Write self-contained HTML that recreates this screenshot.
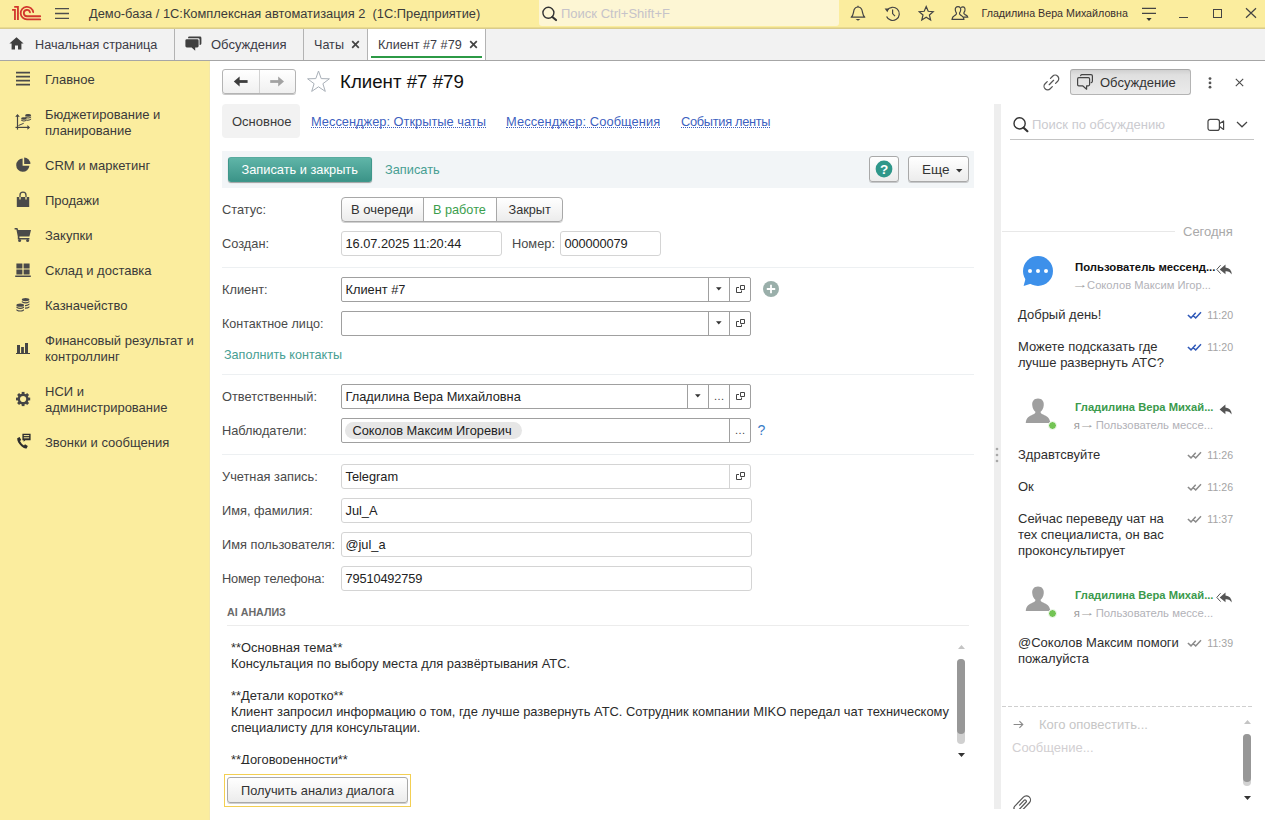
<!DOCTYPE html>
<html lang="ru"><head><meta charset="utf-8"><title>Клиент #7 #79</title>
<style>
*{box-sizing:border-box;margin:0;padding:0}
html,body{width:1265px;height:820px;overflow:hidden;background:#fff}
body{font-family:"Liberation Sans",Arial,sans-serif;font-size:13px;color:#333;position:relative}
.a{position:absolute;white-space:nowrap}
#titlebar{left:0;top:0;width:1265px;height:29px;background:linear-gradient(#fbed9e 0,#fbed9e 27px,#eadb8e 27px,#eadb8e 28px,#d9cc8c 28px,#d9cc8c 29px)}
#tabbar{left:0;top:29px;width:1265px;height:32px;background:#f2f2f2;border-bottom:1px solid #a6a6a6}
#sidebar{left:0;top:61px;width:210px;height:759px;background:#fbed9e;border-right:1px solid #f4e8a8}
.t{position:absolute;white-space:nowrap;line-height:16px}
.sep{position:absolute;width:1px;background:#b3b3b3;top:29px;height:31px}
.side{position:absolute;left:45px;font-size:13px;line-height:16px;color:#3a3a3a}
.lbl{position:absolute;margin-top:1px;left:222px;font-size:12.8px;line-height:16px;color:#4a4a4a;white-space:nowrap}
.inp{position:absolute;height:24px;border:1px solid #a0a0a0;border-radius:2px;background:#fff;font-size:12.8px;line-height:23px;padding-left:3.5px;color:#222;white-space:nowrap}
.inp.ro{border-color:#d4d4d4}
.hr{position:absolute;left:222px;width:752px;height:1px;background:#edf0f2}
.btn{position:absolute;border:1px solid #a9a9a9;border-radius:3px;background:linear-gradient(#ffffff,#ececec);box-shadow:0 1px 0 rgba(0,0,0,.18);font-size:13px;color:#333;text-align:center;white-space:nowrap}
.ib{position:absolute;top:0;height:23px;width:22px;border-left:1px solid #a0a0a0}
.msg{position:absolute;left:1018px;font-size:13px;line-height:16px;color:#2e2e2e;white-space:nowrap}
.tm{position:absolute;left:1207.3px;font-size:10.6px;line-height:16px;color:#a4a4a4}
.nm{position:absolute;left:1075px;font-size:11.2px;font-weight:bold;line-height:14px;white-space:nowrap}
.sub{position:absolute;left:1075px;font-size:11.3px;line-height:14px;color:#b2b2b8;white-space:nowrap}
.lnk{position:absolute;font-size:12.85px;line-height:16px;color:#3d5fc0;white-space:nowrap;border-bottom:1px dotted #3d5fc0;height:14px}
</style></head><body>
<!-- TITLEBAR -->
<div class="a" id="titlebar">
<svg class="a" style="left:8px;top:2px" width="40" height="24" viewBox="0 0 40 24"><g fill="none" stroke="#d2372d" stroke-width="1.8"><path d="M6.2 4.95H9.95V18.1"/><path d="M4.1 7.95H6.95V18.1"/><path d="M25.2 10.2A6.3 6.3 0 1 0 19 17.4H32.2" stroke-linecap="round"/><path d="M22 10.3A3.15 3.15 0 1 0 19 14.25H32.2" stroke-linecap="round"/></g></svg>
<svg class="a" style="left:55px;top:7px" width="15" height="13" viewBox="0 0 15 13"><path d="M0 1.7H14M0 6.5H14M0 11.3H14" stroke="#4d4d4d" stroke-width="1.3"/></svg>
<div class="t" style="left:89px;top:6px;font-size:12.85px;white-space:pre;color:#3b3b3b">Демо-база / 1С:Комплексная автоматизация 2  (1С:Предприятие)</div>
<div class="a" style="left:539px;top:0;width:300px;height:26px;background:#fdf6d4;border-radius:0 0 3px 3px"></div>
<svg class="a" style="left:540px;top:5px" width="18" height="17" viewBox="0 0 18 17"><circle cx="8.4" cy="7.8" r="5.5" fill="none" stroke="#333" stroke-width="1.4"/><path d="M12.4 12 L16 15" stroke="#333" stroke-width="2.2" stroke-linecap="round"/></svg>
<div class="t" style="left:561px;top:6px;font-size:13px;color:#c6c3c9">Поиск Ctrl+Shift+F</div>
<svg class="a" style="left:850px;top:5px" width="16" height="17" viewBox="0 0 16 17"><path d="M1.2 12.2 C3.6 10.5 3.2 7 4.2 4.6 C5 2.6 6.6 2 8 2 C9.4 2 11 2.6 11.8 4.6 C12.8 7 12.4 10.5 14.8 12.2 Z" fill="none" stroke="#444" stroke-width="1.2" stroke-linejoin="round"/><path d="M8 0.8V2" stroke="#444" stroke-width="1.2"/><path d="M5.6 14 H10.4 L8 15.8Z" fill="#444"/></svg>
<svg class="a" style="left:884px;top:5px" width="17" height="17" viewBox="0 0 17 17"><path d="M3.2 5.2 A6.6 6.6 0 1 1 2.6 11.4" fill="none" stroke="#444" stroke-width="1.2"/><path d="M0.6 3.6 L5 3.4 L3.4 7.2Z" fill="#444"/><path d="M8.6 4.4 V8.6 L11 11.2" fill="none" stroke="#444" stroke-width="1.2"/></svg>
<svg class="a" style="left:918px;top:5px" width="17" height="17" viewBox="0 0 17 17"><path d="M8.2 1.6 L10.2 6.3 L15.2 6.7 L11.4 10 L12.6 15 L8.2 12.3 L3.8 15 L5 10 L1.2 6.7 L6.2 6.3 Z" fill="none" stroke="#444" stroke-width="1.2" stroke-linejoin="miter"/></svg>
<svg class="a" style="left:951px;top:5px" width="18" height="17" viewBox="0 0 18 17"><g fill="none" stroke="#444" stroke-width="1.2" stroke-linejoin="round"><path d="M10.2 2.8 C10.8 1.6 12.8 1.4 13.6 2.8 C14.4 4.2 13.9 6.6 12.9 7.6 C12.6 8.4 13 9 14 9.6 C15.4 10.3 16.6 10.6 16.8 12.2 H12.6"/><path d="M7 1.6 C9 1.6 9.9 3.2 9.7 5 C9.5 6.6 8.9 7.6 8.5 8.2 C8.3 9.2 8.8 9.8 10 10.4 C11.6 11.2 12.8 11.6 13 14.4 H1 C1.2 11.6 2.4 11.2 4 10.4 C5.2 9.8 5.7 9.2 5.5 8.2 C5.1 7.6 4.5 6.6 4.3 5 C4.1 3.2 5 1.6 7 1.6Z"/></g></svg>
<div class="t" style="left:981.5px;top:5px;font-size:10.7px;color:#3a2f2f">Гладилина Вера Михайловна</div>
<svg class="a" style="left:1141px;top:6px" width="16" height="16" viewBox="0 0 16 16"><path d="M1 2.3H15M1 7.4H15" stroke="#444" stroke-width="1.2"/><path d="M5.4 12 H10.6 L8 15Z" fill="#333"/></svg>
<div class="a" style="left:1179px;top:16.5px;width:9px;height:1.4px;background:#444"></div>
<div class="a" style="left:1213px;top:9px;width:9px;height:9px;border:1.3px solid #444"></div>
<svg class="a" style="left:1245px;top:7px" width="12" height="12" viewBox="0 0 12 12"><path d="M1 1.2 L11 10.8 M11 1.2 L1 10.8" stroke="#444" stroke-width="1.2"/></svg>
</div>
<!-- TABBAR -->
<div class="a" id="tabbar"></div>
<svg class="a" style="left:9px;top:37px" width="15" height="13" viewBox="0 0 15 13"><path d="M7.5 0.3 L0.4 6.6 H2.6 V12.6 H6 V8.4 H9 V12.6 H12.4 V6.6 H14.6 Z" fill="#3f3f3f"/></svg>
<div class="t" style="left:35px;top:37px;font-size:12.65px;color:#3b3b46">Начальная страница</div>
<div class="sep" style="left:174px"></div>
<svg class="a" style="left:185px;top:36px" width="17" height="16" viewBox="0 0 17 16"><path d="M4.4 0.6 H15 Q16.4 0.6 16.4 2 V7.6 Q16.4 9 15 9 H14.6 V3.6 Q14.6 2.2 13.2 2.2 H3 V2 Q3 0.6 4.4 0.6Z" fill="#3f3f3f"/><path d="M1.8 3.2 H12.2 Q13.6 3.2 13.6 4.6 V10 Q13.6 11.4 12.2 11.4 H10.2 V14.8 L6.6 11.4 H1.8 Q0.4 11.4 0.4 10 V4.6 Q0.4 3.2 1.8 3.2Z" fill="#3f3f3f"/></svg>
<div class="t" style="left:211px;top:37px;font-size:13px;color:#3b3b46">Обсуждения</div>
<div class="sep" style="left:303px"></div>
<div class="t" style="left:314px;top:37px;font-size:12.6px;color:#3b3b46">Чаты</div>
<svg class="a" style="left:351px;top:40px" width="9" height="9" viewBox="0 0 9 9"><path d="M1.2 1.2 L7.8 7.8 M7.8 1.2 L1.2 7.8" stroke="#444" stroke-width="1.7"/></svg>
<div class="sep" style="left:367px"></div>
<div class="a" style="left:368px;top:29px;width:117px;height:31px;background:#fff"></div>
<div class="a" style="left:371px;top:56px;width:111px;height:2px;background:#2c9a46"></div>
<div class="t" style="left:378px;top:37px;font-size:12.64px;color:#3b3b46">Клиент #7 #79</div>
<svg class="a" style="left:469px;top:40px" width="9" height="9" viewBox="0 0 9 9"><path d="M1.2 1.2 L7.8 7.8 M7.8 1.2 L1.2 7.8" stroke="#444" stroke-width="1.7"/></svg>
<div class="sep" style="left:485px"></div>
<!-- SIDEBAR -->
<div class="a" id="sidebar"></div>
<svg class="a" style="left:16px;top:71px" width="14" height="15" viewBox="0 0 14 15"><path d="M0 1.6H14M0 5.6H14M0 9.6H14M0 13.6H14" stroke="#4a4a4a" stroke-width="1.7"/></svg>
<div class="side" style="top:72px">Главное</div>
<svg class="a" style="left:15px;top:113px" width="17" height="18" viewBox="0 0 17 18"><g stroke="#454545" fill="none"><path d="M2.5 2.5V16.6" stroke-width="1.2"/><path d="M0.5 14.4H13" stroke-width="1.2"/><path d="M3.5 12.5L8.7 10.3" stroke-width="1"/></g><path d="M2.5 1L4.8 3.7H0.2ZM15.1 14.4L12.4 12.1V16.7Z" fill="#454545"/><g fill="#454545"><ellipse cx="13.1" cy="2.4" rx="3" ry="1.3"/><path d="M10.1 3.5Q13.1 5.5 16.1 3.5V4.5Q13.1 6.5 10.1 4.5Z"/><path d="M11.6 6.6Q14 6.9 16.1 5.4V6.4Q14 7.9 11.6 7.6Z"/><ellipse cx="8.9" cy="5.4" rx="2.8" ry="1.25"/><path d="M6.1 6.5Q8.9 8.5 11.7 6.5V7.5Q8.9 9.5 6.1 7.5Z"/></g></svg>
<div class="side" style="top:107px">Бюджетирование и<br>планирование</div>
<svg class="a" style="left:16px;top:157px" width="15" height="16" viewBox="0 0 15 16"><path d="M6.6 1.6 A6.6 6.6 0 1 0 13.4 8.8 H6.6Z" fill="#4a4a4a"/><path d="M8.2 0.6 A6.4 6.4 0 0 1 14.4 7 H8.2Z" fill="#4a4a4a"/></svg>
<div class="side" style="top:158px">CRM и маркетинг</div>
<svg class="a" style="left:16px;top:191px" width="14" height="17" viewBox="0 0 14 17"><path d="M0.8 6 H13.2 V16 H0.8Z" fill="#4a4a4a"/><path d="M4 8.4 V4.2 A3 3 0 0 1 10 4.2 V8.4" fill="none" stroke="#4a4a4a" stroke-width="1.3"/><path d="M4 6V8.4M10 6V8.4" stroke="#fbed9e" stroke-width="1.3"/></svg>
<div class="side" style="top:193px">Продажи</div>
<svg class="a" style="left:14px;top:227px" width="18" height="16" viewBox="0 0 18 16"><path d="M0.6 1 H3.4 L4.2 3 H17 L15.4 9.6 H5.4 V11 H15.4 V12.4 H3.8 V9.4 L2.4 2.4 H0.6Z" fill="#4a4a4a"/><circle cx="5.6" cy="13.6" r="1.5" fill="#4a4a4a"/><circle cx="13.6" cy="13.6" r="1.5" fill="#4a4a4a"/></svg>
<div class="side" style="top:228px">Закупки</div>
<svg class="a" style="left:15px;top:263px" width="16" height="15" viewBox="0 0 16 15"><path d="M1.4 0.4H7.4V5.4H1.4ZM8.6 0.4H14.6V5.4H8.6ZM1.4 6.6H7.4V11.6H1.4ZM8.6 6.6H14.6V11.6H8.6ZM0.2 12.6H15.8V14H0.2Z" fill="#4a4a4a"/></svg>
<div class="side" style="top:263px">Склад и доставка</div>
<svg class="a" style="left:16px;top:297px" width="15" height="17" viewBox="0 0 15 17"><g fill="#4a4a4a"><ellipse cx="9.6" cy="2.6" rx="3.8" ry="1.6"/><path d="M5.8 4 Q9.6 6.4 13.4 4 V5.2 Q9.6 7.6 5.8 5.2Z"/><path d="M9 7.9 Q11.6 8 13.4 6.6 V7.8 Q11.6 9.4 9 9.2Z"/><path d="M9 10.5 Q11.6 10.6 13.4 9.2 V10.4 Q11.6 12 9 11.8Z"/><ellipse cx="4.2" cy="8.2" rx="3.8" ry="1.6"/><path d="M0.4 9.6 Q4.2 12 8 9.6 V10.8 Q4.2 13.2 0.4 10.8Z"/><path d="M0.4 12.2 Q4.2 14.6 8 12.2 V13.4 Q4.2 15.8 0.4 13.4Z"/></g></svg>
<div class="side" style="top:298px">Казначейство</div>
<svg class="a" style="left:16px;top:343px" width="15" height="12" viewBox="0 0 15 12"><path d="M1 2H4V10.3H1ZM5.1 4.1H7.9V10.3H5.1ZM9 0H12V10.3H9ZM0 10.1H14V11.1H0Z" fill="#454545"/></svg>
<div class="side" style="top:333px">Финансовый результат и<br>контроллинг</div>
<svg class="a" style="left:15px;top:391px" width="16" height="16" viewBox="0 0 16 16"><g transform="translate(8.1 8)"><circle r="4.3" fill="none" stroke="#454545" stroke-width="2.4"/><g fill="#454545"><rect x="-1.4" y="-7.1" width="2.8" height="3" transform="rotate(0)"/><rect x="-1.4" y="-7.1" width="2.8" height="3" transform="rotate(45)"/><rect x="-1.4" y="-7.1" width="2.8" height="3" transform="rotate(90)"/><rect x="-1.4" y="-7.1" width="2.8" height="3" transform="rotate(135)"/><rect x="-1.4" y="-7.1" width="2.8" height="3" transform="rotate(180)"/><rect x="-1.4" y="-7.1" width="2.8" height="3" transform="rotate(225)"/><rect x="-1.4" y="-7.1" width="2.8" height="3" transform="rotate(270)"/><rect x="-1.4" y="-7.1" width="2.8" height="3" transform="rotate(315)"/></g></g></svg>
<div class="side" style="top:384px">НСИ и<br>администрирование</div>
<svg class="a" style="left:15px;top:433px" width="17" height="17" viewBox="0 0 17 17"><path d="M2.2 5.2 L4.6 4 L6.2 7 L5 8 Q6.4 11 9 12.4 L10 11.2 L12.8 13 L11.6 15.4 Q9.8 16.2 6.4 13.2 Q2 9 2.2 5.2Z" fill="#2e2e2e"/><path d="M7.4 0.8 H15.6 V7.2 H10.4 L8.6 8.8 V7.2 H7.4Z" fill="#2e2e2e"/><path d="M8.8 2.6H14.2M8.8 4.8H14.2" stroke="#fbed9e" stroke-width="1"/></svg>
<div class="side" style="top:435px">Звонки и сообщения</div>
<!-- MAIN -->
<div class="a" style="left:222px;top:69px;width:74px;height:25px;border:1px solid #b4b4b4;border-radius:3px;background:linear-gradient(#fff,#f0f0f0);box-shadow:0 1px 0 rgba(0,0,0,.22)"></div>
<div class="a" style="left:259px;top:70px;width:1px;height:23px;background:#d2d2d2"></div>
<svg class="a" style="left:233px;top:76px" width="16" height="11" viewBox="0 0 16 11"><path d="M14.6 5.5H4" stroke="#3c3c3c" stroke-width="2.8"/><path d="M0.8 5.5L6.6 0.4V10.6Z" fill="#3c3c3c"/></svg>
<svg class="a" style="left:269px;top:76px" width="16" height="11" viewBox="0 0 16 11"><path d="M1.2 5.5H12" stroke="#a2a2a2" stroke-width="2.8"/><path d="M15 5.5L9.2 0.4V10.6Z" fill="#a2a2a2"/></svg>
<svg class="a" style="left:306px;top:69px" width="25" height="24" viewBox="0 0 25 24"><path d="M12.5 2 L15.2 9.6 L23.4 9.8 L16.9 14.7 L19.3 22.4 L12.5 17.8 L5.7 22.4 L8.1 14.7 L1.6 9.8 L9.8 9.6 Z" fill="#fff" stroke="#a9b0b8" stroke-width="1"/></svg>
<div class="t" style="left:340px;top:70px;font-size:18.7px;line-height:24px;color:#111">Клиент #7 #79</div>
<svg class="a" style="left:1041px;top:72px" width="21" height="21" viewBox="0 0 21 21"><g transform="translate(10.4 10.5) rotate(-45)" fill="none" stroke="#555" stroke-width="1.25" stroke-linecap="round"><path d="M2.3 -3.6H5.3A3.6 3.6 0 0 1 5.3 3.6H2.3"/><path d="M-2.3 -3.6H-5.3A3.6 3.6 0 0 0 -5.3 3.6H-2.3"/><path d="M-3.1 0H3.1"/></g></svg>
<div class="a" style="left:1070px;top:69px;width:121px;height:26px;border:1px solid #b4b4b4;border-top-color:#a8a8a8;border-radius:3px;background:linear-gradient(#d0d0d0 0,#e0e0e0 5px,#ebebeb 100%)"></div>
<svg class="a" style="left:1076px;top:73px" width="18" height="18" viewBox="0 0 18 18"><g fill="none" stroke="#444" stroke-width="1.2" stroke-linejoin="round" stroke-linecap="round"><path d="M4.6 2.6Q5 1.6 6 1.6H15Q16.4 1.6 16.4 3V8.2Q16.4 9.4 15.2 9.6"/><path d="M2.8 4.7H12.4Q13.6 4.7 13.6 5.9V11.6Q13.6 12.8 12.4 12.8H10.6V16.2L6.6 12.8H2.8Q1.6 12.8 1.6 11.6V5.9Q1.6 4.7 2.8 4.7Z"/></g></svg>
<div class="t" style="left:1100px;top:75px;font-size:13px;color:#333">Обсуждение</div>
<svg class="a" style="left:1207px;top:76px" width="6" height="14" viewBox="0 0 6 14"><circle cx="3" cy="2.6" r="1.4" fill="#555"/><circle cx="3" cy="6.9" r="1.4" fill="#555"/><circle cx="3" cy="11.2" r="1.4" fill="#555"/></svg>
<svg class="a" style="left:1235px;top:78px" width="9" height="9" viewBox="0 0 9 9"><path d="M0.8 0.8L8.2 8.2M8.2 0.8L0.8 8.2" stroke="#4a4a4a" stroke-width="1.1"/></svg>

<div class="a" style="left:222px;top:104px;width:78px;height:34px;background:#f2f2f2;border-radius:4px"></div>
<div class="t" style="left:232px;top:114px;font-size:13px;color:#3a3a3a">Основное</div>
<div class="lnk" style="left:311px;top:114px">Мессенджер: Открытые чаты</div>
<div class="lnk" style="left:506px;top:114px;letter-spacing:0.1px">Мессенджер: Сообщения</div>
<div class="lnk" style="left:681px;top:114px;letter-spacing:-0.32px">События ленты</div>

<div class="a" style="left:222px;top:151px;width:752px;height:37px;background:#f2f5f7"></div>
<div class="a" style="left:228px;top:157px;width:144px;height:25px;border-radius:3px;background:linear-gradient(#5fb5a8,#3c9488);box-shadow:0 1px 1px rgba(0,0,0,.35);border:1px solid #3f978b;border-top-color:#58ab9f"></div>
<div class="t" style="left:241.5px;top:162px;font-size:12.8px;color:#fff">Записать и закрыть</div>
<div class="t" style="left:385px;top:162px;font-size:12.8px;color:#479e92">Записать</div>
<div class="btn" style="left:869px;top:156px;width:30px;height:26px"></div>
<svg class="a" style="left:875px;top:160px" width="18" height="18" viewBox="0 0 18 18"><circle cx="9" cy="9" r="8.4" fill="#2f978a"/><text x="9" y="13.6" text-anchor="middle" font-family="Liberation Sans,Arial,sans-serif" font-weight="bold" font-size="13.5" fill="#fff">?</text></svg>
<div class="btn" style="left:908px;top:156px;width:61px;height:26px"></div>
<div class="t" style="left:922px;top:162px;font-size:13.5px;color:#333">Еще</div>
<svg class="a" style="left:956px;top:169px" width="7" height="4" viewBox="0 0 7 4"><path d="M0 0H6.4L3.2 3.6Z" fill="#333"/></svg>

<div class="lbl" style="top:201px">Статус:</div>
<div class="a" style="left:341px;top:197px;width:222px;height:25px;border:1px solid #a8a8a8;border-radius:4px;background:linear-gradient(#fff,#ececec);box-shadow:0 1px 0 rgba(0,0,0,.18);overflow:hidden">
<div class="a" style="left:81px;top:0;width:74px;height:23px;background:#fff;border-left:1px solid #a8a8a8;border-right:1px solid #a8a8a8"></div>
</div>
<div class="t" style="left:351px;top:202px;font-size:13px;color:#333">В очереди</div>
<div class="t" style="left:433px;top:202px;font-size:12.7px;color:#3b9e4d">В работе</div>
<div class="t" style="left:508.5px;top:202px;font-size:12.7px;color:#333">Закрыт</div>

<div class="lbl" style="top:235px">Создан:</div>
<div class="inp ro" style="left:341px;top:231px;width:161px;height:25px;border-radius:3px;letter-spacing:-0.03px">16.07.2025 11:20:44</div>
<div class="lbl" style="left:512px;top:235px">Номер:</div>
<div class="inp ro" style="left:560px;top:231px;width:101px;height:25px;border-radius:3px;letter-spacing:-0.11px">000000079</div>
<div class="hr" style="top:267px"></div>

<div class="lbl" style="top:281px">Клиент:</div>
<div class="inp" style="left:341px;top:277px;width:410px;height:25px">Клиент #7<div class="ib" style="left:366px"><svg style="position:absolute;left:6.7px;top:9px" width="6" height="4" viewBox="0 0 6 4"><path d="M0 0.2H5.6L2.8 3.4Z" fill="#333"/></svg></div><div class="ib" style="left:387px"><svg style="position:absolute;left:6px;top:6px" width="10" height="10" viewBox="0 0 10 10"><path d="M4.5 1.5H8.5V5.5H4.5Z M3 3.5H0.5V8.5H5.5V6.5" fill="none" stroke="#444" stroke-width="1"/></svg></div></div>
<svg class="a" style="left:762px;top:280px" width="18" height="18" viewBox="0 0 18 18"><circle cx="9" cy="9" r="8" fill="#9aafaa"/><path d="M9 4.8V13.2M4.8 9H13.2" stroke="#fff" stroke-width="1.8"/></svg>
<div class="lbl" style="top:315px;font-size:12.55px">Контактное лицо:</div>
<div class="inp" style="left:341px;top:311px;width:410px;height:25px"><div class="ib" style="left:366px"><svg style="position:absolute;left:6.7px;top:9px" width="6" height="4" viewBox="0 0 6 4"><path d="M0 0.2H5.6L2.8 3.4Z" fill="#333"/></svg></div><div class="ib" style="left:387px"><svg style="position:absolute;left:6px;top:6px" width="10" height="10" viewBox="0 0 10 10"><path d="M4.5 1.5H8.5V5.5H4.5Z M3 3.5H0.5V8.5H5.5V6.5" fill="none" stroke="#444" stroke-width="1"/></svg></div></div>
<div class="t" style="left:224px;top:347px;font-size:12.6px;color:#479e92">Заполнить контакты</div>
<div class="hr" style="top:374px"></div>

<div class="lbl" style="top:388px">Ответственный:</div>
<div class="inp" style="left:341px;top:384px;width:410px;height:25px">Гладилина Вера Михайловна<div class="ib" style="left:345px"><svg style="position:absolute;left:6.7px;top:9px" width="6" height="4" viewBox="0 0 6 4"><path d="M0 0.2H5.6L2.8 3.4Z" fill="#333"/></svg></div><div class="ib" style="left:366px"><span style="position:absolute;left:5px;top:3px;font-size:11px;line-height:16px;color:#444;letter-spacing:0.5px">...</span></div><div class="ib" style="left:387px"><svg style="position:absolute;left:6px;top:6px" width="10" height="10" viewBox="0 0 10 10"><path d="M4.5 1.5H8.5V5.5H4.5Z M3 3.5H0.5V8.5H5.5V6.5" fill="none" stroke="#444" stroke-width="1"/></svg></div></div>
<div class="lbl" style="top:422px">Наблюдатели:</div>
<div class="inp" style="left:341px;top:418px;width:410px;height:25px"><div class="a" style="left:3px;top:3px;width:177px;height:17px;border-radius:9px;background:#e6e6e6;font-size:12.8px;line-height:17px;padding-left:7.5px;color:#222">Соколов Максим Игоревич</div><div class="ib" style="left:387px"><span style="position:absolute;left:5px;top:3px;font-size:11px;line-height:16px;color:#444;letter-spacing:0.5px">...</span></div></div>
<div class="t" style="left:757.5px;top:422px;font-size:14px;color:#3a7cc6">?</div>
<div class="hr" style="top:454px"></div>

<div class="lbl" style="top:468px">Учетная запись:</div>
<div class="inp ro" style="left:341px;top:464px;width:410px;height:25px;border-radius:3px">Telegram<div class="ib" style="left:387px;border-left-color:#d4d4d4"><svg style="position:absolute;left:6px;top:6px" width="10" height="10" viewBox="0 0 10 10"><path d="M4.5 1.5H8.5V5.5H4.5Z M3 3.5H0.5V8.5H5.5V6.5" fill="none" stroke="#444" stroke-width="1"/></svg></div></div>
<div class="lbl" style="top:502px">Имя, фамилия:</div>
<div class="inp ro" style="left:341px;top:498px;width:411px;height:25px;border-radius:3px">Jul_A</div>
<div class="lbl" style="top:536px">Имя пользователя:</div>
<div class="inp ro" style="left:341px;top:532px;width:411px;height:25px;border-radius:3px">@jul_a</div>
<div class="lbl" style="top:570px;letter-spacing:-0.18px">Номер телефона:</div>
<div class="inp ro" style="left:341px;top:566px;width:411px;height:25px;border-radius:3px;letter-spacing:-0.14px">79510492759</div>

<div class="t" style="left:227px;top:605px;font-size:10.7px;font-weight:bold;color:#6a6a6a;line-height:14px">AI АНАЛИЗ</div>
<div class="a" style="left:227px;top:625px;width:742px;height:1px;background:#ececec"></div>
<div class="a" style="left:231px;top:640px;width:726px;height:127px;overflow:hidden;white-space:normal;font-size:12.9px;line-height:16px;color:#2b2b2b">**Основная тема**<br>Консультация по выбору места для развёртывания АТС.<br><br>**Детали коротко**<br>Клиент запросил информацию о том, где лучше развернуть АТС. Сотрудник компании MIKO передал чат техническому специалисту для консультации.<br><br>**Договоренности**</div>
<div class="a" style="left:226px;top:764px;width:730px;height:10px;background:#fff"></div>
<svg class="a" style="left:958px;top:645px" width="7" height="4" viewBox="0 0 7 4"><path d="M0 4H7L3.5 0Z" fill="#c4c4c4"/></svg>
<div class="a" style="left:957px;top:659px;width:8px;height:85px;border-radius:4px;background:#d0d0d0"></div>
<div class="a" style="left:957px;top:659px;width:8px;height:75px;border-radius:4px;background:#979797"></div>
<svg class="a" style="left:958px;top:753px" width="7" height="4" viewBox="0 0 7 4"><path d="M0 0H7L3.5 4Z" fill="#333"/></svg>
<div class="a" style="left:224px;top:774px;width:187px;height:33px;border:1px solid #f3cf52"></div>
<div class="btn" style="left:227px;top:777px;width:181px;height:26px"></div>
<div class="t" style="left:241px;top:783px;font-size:12.8px;color:#333">Получить анализ диалога</div>

<div class="a" style="left:994px;top:104px;width:7px;height:705px;background:#eeeeee"></div>
<svg class="a" style="left:995px;top:446px" width="4" height="18" viewBox="0 0 4 18"><circle cx="2" cy="3" r="1.3" fill="#a8a8a8"/><circle cx="2" cy="9" r="1.3" fill="#a8a8a8"/><circle cx="2" cy="15" r="1.3" fill="#a8a8a8"/></svg>

<!-- RIGHT -->
<svg class="a" style="left:1012px;top:116px" width="17" height="17" viewBox="0 0 17 17"><circle cx="7.6" cy="7.4" r="5.6" fill="none" stroke="#333" stroke-width="1.4"/><path d="M11.6 11.8 L15.4 15.2" stroke="#333" stroke-width="2.2" stroke-linecap="round"/></svg>
<div class="t" style="left:1032px;top:117px;font-size:13px;color:#cbcbd0">Поиск по обсуждению</div>
<svg class="a" style="left:1207px;top:118px" width="18" height="14" viewBox="0 0 18 14"><rect x="1" y="1.4" width="11.4" height="11" rx="2.2" fill="none" stroke="#444" stroke-width="1.2"/><path d="M12.6 5.6 L16.6 3 V11.4 L12.6 8.6" fill="none" stroke="#444" stroke-width="1.2" stroke-linejoin="round"/></svg>
<svg class="a" style="left:1236px;top:121px" width="12" height="7" viewBox="0 0 12 7"><path d="M1 1 L6 5.8 L11 1" fill="none" stroke="#444" stroke-width="1.2"/></svg>
<div class="a" style="left:1010px;top:139px;width:244px;height:1px;background:#c4c4c4"></div>

<div class="a" style="left:1002px;top:231px;width:173px;height:1px;background:#e8e8e8"></div>
<div class="t" style="left:1183px;top:224px;font-size:13px;color:#a9a9a9">Сегодня</div>

<svg class="a" style="left:1021px;top:255px" width="34" height="34" viewBox="0 0 34 34"><circle cx="17" cy="16" r="15" fill="#3d90ea"/><path d="M5 22 L2.6 31 L12 28Z" fill="#3d90ea"/><circle cx="9" cy="16.1" r="2" fill="#fff"/><circle cx="17" cy="16.1" r="2" fill="#fff"/><circle cx="25" cy="16.1" r="2" fill="#fff"/></svg>
<div class="nm" style="top:260px;color:#111;font-size:11.34px">Пользователь мессенд...</div>
<svg class="a" style="left:1216px;top:264px" width="17" height="11" viewBox="0 0 17 11"><path d="M4.6 1.2 L0.8 5.4 L4.6 9.6" fill="none" stroke="#555" stroke-width="1"/><g transform="translate(3.1 0)"><path d="M6.4 0.6 L0.6 5.4 L6.4 10.2 V7.2 Q10.6 6.8 12.6 10.6 Q12.4 4.2 6.4 3.6Z" fill="#555"/></g></svg>
<div class="sub" style="top:278px;font-size:11.17px"><span style="display:inline-block;position:relative;top:-1px;font-size:11px;transform:scaleX(1.5);transform-origin:0 50%;margin-left:-3.4px;margin-right:1.4px;color:#9a9a9a">→</span> Соколов Максим Игор...</div>
<div class="msg" style="top:307px">Добрый день!</div><svg class="a" style="left:1187px;top:311px" width="15" height="8" viewBox="0 0 15 8"><path d="M0.9 4 L4 6.9 L8.7 1.8 M6.2 4.8 L8.7 6.9 L14 1.3" fill="none" stroke="#2f59b8" stroke-width="1.5"/></svg><div class="tm" style="top:307px">11:20</div>
<div class="msg" style="top:339px">Можете подсказать где<br>лучше развернуть АТС?</div><svg class="a" style="left:1187px;top:343px" width="15" height="8" viewBox="0 0 15 8"><path d="M0.9 4 L4 6.9 L8.7 1.8 M6.2 4.8 L8.7 6.9 L14 1.3" fill="none" stroke="#2f59b8" stroke-width="1.5"/></svg><div class="tm" style="top:339px">11:20</div>

<svg class="a" style="left:1025px;top:398px" width="26" height="26" viewBox="0 0 28 27" preserveAspectRatio="none"><path d="M14 0.4 C18.4 0.4 20.6 3.4 20.2 7.4 C19.9 10.6 18.4 12.8 16.8 14.2 C16.6 15.4 17.4 16.2 19.6 17.2 C23.4 19 26.6 20.2 27.2 26 H0.8 C1.4 20.2 4.6 19 8.4 17.2 C10.6 16.2 11.4 15.4 11.2 14.2 C9.6 12.8 8.1 10.6 7.8 7.4 C7.4 3.4 9.6 0.4 14 0.4Z" fill="#9f9f9f"/></svg><div class="a" style="left:1048.2px;top:421.2px;width:9px;height:9px;border-radius:5px;background:#73c454;border:1px solid #fff"></div>
<div class="nm" style="top:400px;color:#3a9a4c">Гладилина Вера Михай...</div>
<svg class="a" style="left:1219.3px;top:404px" width="13" height="11" viewBox="0 0 13 11"><path d="M6.4 0.6 L0.6 5.4 L6.4 10.2 V7.2 Q10.6 6.8 12.6 10.6 Q12.4 4.2 6.4 3.6Z" fill="#555"/></svg>
<div class="sub" style="left:1073.7px;top:418px"><span style="color:#9a9a9a">я</span> <span style="display:inline-block;position:relative;top:-1px;font-size:11px;transform:scaleX(1.5);transform-origin:0 50%;margin-left:-4px;margin-right:2.6px;color:#9a9a9a">→</span> Пользователь мессе...</div>
<div class="msg" style="top:447px">Здравтсвуйте</div><svg class="a" style="left:1187px;top:451px" width="15" height="8" viewBox="0 0 15 8"><path d="M0.9 4 L4 6.9 L8.7 1.8 M6.2 4.8 L8.7 6.9 L14 1.3" fill="none" stroke="#8a8a8a" stroke-width="1.5"/></svg><div class="tm" style="top:447px">11:26</div>
<div class="msg" style="top:479px">Ок</div><svg class="a" style="left:1187px;top:483px" width="15" height="8" viewBox="0 0 15 8"><path d="M0.9 4 L4 6.9 L8.7 1.8 M6.2 4.8 L8.7 6.9 L14 1.3" fill="none" stroke="#8a8a8a" stroke-width="1.5"/></svg><div class="tm" style="top:479px">11:26</div>
<div class="msg" style="top:511px">Сейчас переведу чат на<br>тех специалиста, он вас<br>проконсультирует</div><svg class="a" style="left:1187px;top:515px" width="15" height="8" viewBox="0 0 15 8"><path d="M0.9 4 L4 6.9 L8.7 1.8 M6.2 4.8 L8.7 6.9 L14 1.3" fill="none" stroke="#8a8a8a" stroke-width="1.5"/></svg><div class="tm" style="top:511px">11:37</div>

<svg class="a" style="left:1025px;top:586px" width="26" height="26" viewBox="0 0 28 27" preserveAspectRatio="none"><path d="M14 0.4 C18.4 0.4 20.6 3.4 20.2 7.4 C19.9 10.6 18.4 12.8 16.8 14.2 C16.6 15.4 17.4 16.2 19.6 17.2 C23.4 19 26.6 20.2 27.2 26 H0.8 C1.4 20.2 4.6 19 8.4 17.2 C10.6 16.2 11.4 15.4 11.2 14.2 C9.6 12.8 8.1 10.6 7.8 7.4 C7.4 3.4 9.6 0.4 14 0.4Z" fill="#9f9f9f"/></svg><div class="a" style="left:1048.2px;top:609.2px;width:9px;height:9px;border-radius:5px;background:#73c454;border:1px solid #fff"></div>
<div class="nm" style="top:588px;color:#3a9a4c">Гладилина Вера Михай...</div>
<svg class="a" style="left:1216px;top:592px" width="17" height="11" viewBox="0 0 17 11"><path d="M4.6 1.2 L0.8 5.4 L4.6 9.6" fill="none" stroke="#555" stroke-width="1"/><g transform="translate(3.1 0)"><path d="M6.4 0.6 L0.6 5.4 L6.4 10.2 V7.2 Q10.6 6.8 12.6 10.6 Q12.4 4.2 6.4 3.6Z" fill="#555"/></g></svg>
<div class="sub" style="left:1073.7px;top:606px"><span style="color:#9a9a9a">я</span> <span style="display:inline-block;position:relative;top:-1px;font-size:11px;transform:scaleX(1.5);transform-origin:0 50%;margin-left:-4px;margin-right:2.6px;color:#9a9a9a">→</span> Пользователь мессе...</div>
<div class="msg" style="top:635px">@Соколов Максим помоги<br>пожалуйста</div><svg class="a" style="left:1187px;top:639px" width="15" height="8" viewBox="0 0 15 8"><path d="M0.9 4 L4 6.9 L8.7 1.8 M6.2 4.8 L8.7 6.9 L14 1.3" fill="none" stroke="#8a8a8a" stroke-width="1.5"/></svg><div class="tm" style="top:635px">11:39</div>

<div class="a" style="left:1002px;top:706px;width:250px;height:1px;background:repeating-linear-gradient(90deg,#cfcfcf 0 4px,transparent 4px 6px)"></div>
<svg class="a" style="left:1013px;top:720px" width="11" height="9" viewBox="0 0 11 9"><path d="M0.6 4.5H9.6M6.4 1.2L9.8 4.5L6.4 7.8" fill="none" stroke="#8a8a8a" stroke-width="1.1"/></svg>
<div class="t" style="left:1039px;top:717px;font-size:13px;color:#c6c6c6">Кого оповестить...</div>
<div class="t" style="left:1012px;top:740px;font-size:13px;color:#d2cfd2">Сообщение...</div>
<svg class="a" style="left:1244px;top:720px" width="7" height="4" viewBox="0 0 7 4"><path d="M0 4H7L3.5 0Z" fill="#c4c4c4"/></svg>
<div class="a" style="left:1243px;top:734px;width:8px;height:52px;border-radius:4px;background:#d2d2d2"></div>
<div class="a" style="left:1243px;top:734px;width:8px;height:48px;border-radius:4px;background:#979797"></div>
<svg class="a" style="left:1244px;top:796px" width="7" height="4" viewBox="0 0 7 4"><path d="M0 0H7L3.5 4Z" fill="#333"/></svg>
<div class="a" style="left:1008px;top:790px;width:30px;height:19px;overflow:hidden"><svg style="position:absolute;left:0;top:0" width="30" height="30" viewBox="0 0 30 30"><g transform="translate(14.6 13.9) rotate(43.4)"><path d="M4.1 5V-5.5A4.1 4.1 0 0 0 -4.1 -5.5V7A2.725 2.725 0 0 0 1.35 7V-3.5A1.35 1.35 0 0 0 -1.35 -3.5V3" fill="none" stroke="#555" stroke-width="1.2" stroke-linecap="round"/></g></svg></div>

</body></html>
